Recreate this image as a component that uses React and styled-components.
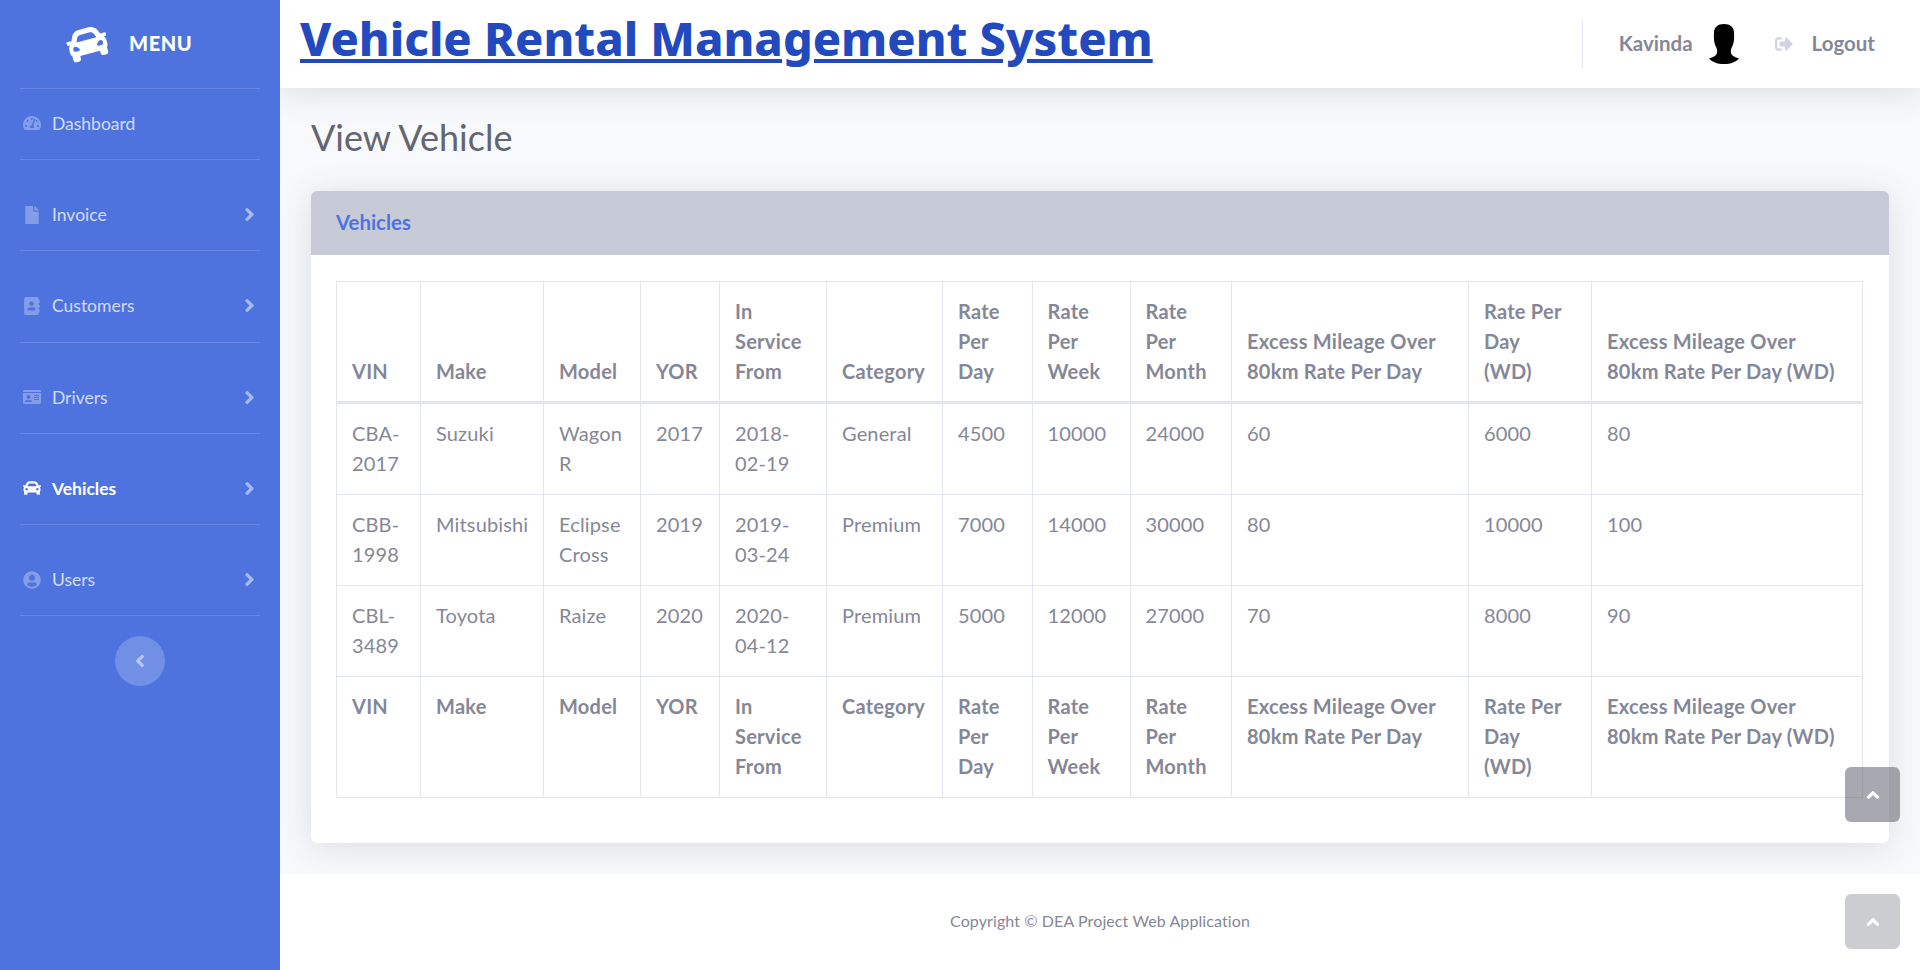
import { Fragment } from 'react';
import styled, { createGlobalStyle } from 'styled-components';
import {
  FaTachometerAlt,
  FaFile,
  FaAddressBook,
  FaIdCard,
  FaCar,
  FaUserCircle,
  FaAngleRight,
  FaAngleLeft,
  FaAngleUp,
  FaSignOutAlt,
} from 'react-icons/fa';

const GlobalStyle = createGlobalStyle`
  * {
    box-sizing: border-box;
  }
  body {
    margin: 0;
    background: #f8f9fc;
    font-family: 'Lato', 'Open Sans', sans-serif;
    color: #858796;
  }
`;

const Wrapper = styled.div`
  display: flex;
  min-height: 100vh;
`;

const Sidebar = styled.aside`
  width: 280px;
  flex-shrink: 0;
  background: #4e73df;
  display: flex;
  flex-direction: column;
  align-items: center;
  position: relative;
  z-index: 1;
`;

const Brand = styled.div`
  width: 100%;
  height: 88px;
  padding: 0 0 2px 67px;
  display: flex;
  align-items: center;
  gap: 21px;
  color: #fff;
  font-size: 20px;
  font-weight: 900;
  letter-spacing: 0.6px;
  text-transform: uppercase;
  svg {
    font-size: 41px;
    transform: rotate(-15deg);
  }
`;

const Divider = styled.hr`
  width: 240px;
  flex-shrink: 0;
  margin: 0;
  border: 0;
  border-top: 1px solid rgba(255, 255, 255, 0.15);
`;

const NavItem = styled.a`
  width: 100%;
  height: ${p => (p.$short ? '70px' : '90.25px')};
  padding: ${p => (p.$short ? '0 0 2px 21px' : '19px 20px 0 21px')};
  display: flex;
  align-items: center;
  font-size: 17.5px;
  font-weight: ${p => (p.$active ? 700 : 400)};
  color: ${p => (p.$active ? '#fff' : 'rgba(255, 255, 255, 0.75)')};
`;

const NavIcon = styled.span`
  width: 21px;
  margin-right: 10px;
  display: flex;
  justify-content: center;
  color: ${p => (p.$active ? '#fff' : 'rgba(255, 255, 255, 0.3)')};
  svg {
    height: 18px;
    width: auto;
  }
`;

const NavLabel = styled.span`
  flex: 1;
`;

const Chevron = styled(FaAngleRight)`
  font-size: 21px;
  color: rgba(255, 255, 255, 0.5);
`;

const Toggle = styled.button`
  width: 50px;
  height: 50px;
  margin-top: 20px;
  padding: 0;
  border: 0;
  border-radius: 50%;
  display: flex;
  align-items: center;
  justify-content: center;
  background: rgba(255, 255, 255, 0.2);
  color: rgba(255, 255, 255, 0.5);
  font-size: 20px;
`;

const Content = styled.div`
  flex: 1;
  min-width: 0;
  display: flex;
  flex-direction: column;
`;

const Topbar = styled.header`
  height: 88px;
  flex-shrink: 0;
  padding: 0 45px 0 20px;
  display: flex;
  align-items: center;
  justify-content: space-between;
  background: #fff;
  box-shadow: 0 4px 35px rgba(58, 59, 69, 0.15);
  position: relative;
`;

const Title = styled.h1`
  margin: 0 0 12px;
  font-family: 'Noto Sans', 'Lato', sans-serif;
  font-size: 46.8px;
  line-height: 60px;
  font-weight: 800;
  color: #224abe;
  text-decoration: underline;
`;

const TopRight = styled.div`
  display: flex;
  align-items: center;
  font-size: 20.5px;
  font-weight: 700;
`;

const TopDivider = styled.div`
  width: 1px;
  height: 48px;
  margin-right: 36px;
  background: #e3e6f0;
`;

const TopText = styled.span`
  padding-bottom: 2px;
`;

const Avatar = styled.svg`
  width: 40px;
  height: 40px;
  margin: 0 31px 0 11px;
`;

const LogoutIcon = styled(FaSignOutAlt)`
  font-size: 18px;
  color: #d1d3e2;
  margin-right: 19px;
`;

const Main = styled.main`
  flex: 1;
  padding: 28px 31px 30px;
`;

const PageTitle = styled.h2`
  margin: 0 0 33px;
  font-size: 36px;
  line-height: 42px;
  font-weight: 400;
  color: #63656f;
`;

const Card = styled.section`
  background: #fff;
  border-radius: 6px;
  overflow: hidden;
  box-shadow: 0 4px 35px rgba(58, 59, 69, 0.15);
`;

const CardHeader = styled.div`
  height: 64px;
  padding: 0 25px 2px;
  display: flex;
  align-items: center;
  background: #c7cbd7;
  color: #4e73df;
  font-size: 20.4px;
  font-weight: 700;
`;

const CardBody = styled.div`
  padding: 26px 25px 45px;
`;

const Table = styled.table`
  width: 1526px;
  table-layout: fixed;
  border-collapse: collapse;
  font-size: 20px;
  line-height: 30px;
  letter-spacing: 0.15px;
  color: #858796;
`;

const Th = styled.th`
  padding: 14px 15px ${p => (p.$head ? '15px' : '16px')};
  text-align: left;
  font-weight: 700;
  letter-spacing: 0.25px;
  white-space: pre-line;
  border: 1px solid #e3e6f0;
  border-bottom-width: ${p => (p.$head ? '3px' : '1px')};
  vertical-align: ${p => (p.$head ? 'bottom' : 'top')};
`;

const Td = styled.td`
  padding: 14px 15px 16px;
  border: 1px solid #e3e6f0;
  vertical-align: top;
`;

const Footer = styled.footer`
  height: 96px;
  flex-shrink: 0;
  padding-bottom: 3px;
  display: flex;
  align-items: center;
  justify-content: center;
  background: #fff;
  font-size: 16px;
  letter-spacing: 0.1px;
  color: #858796;
`;

const ScrollTop = styled.a`
  position: fixed;
  right: 20px;
  bottom: ${p => p.$bottom}px;
  width: 55px;
  height: 55px;
  border-radius: 6px;
  display: flex;
  align-items: center;
  justify-content: center;
  background: rgba(90, 92, 105, ${p => p.$alpha});
  color: #fff;
  font-size: 20px;
`;

const colWidths = [84, 123, 97, 79, 107, 116, 89.5, 98, 101.5, 237, 123, 271];

const columns = [
  'VIN',
  'Make',
  'Model',
  'YOR',
  'In Service From',
  'Category',
  'Rate Per Day',
  'Rate Per Week',
  'Rate Per Month',
  'Excess Mileage Over 80km Rate Per Day',
  'Rate Per\nDay\n(WD)',
  'Excess Mileage Over 80km Rate Per Day (WD)',
];

const vehicles = [
  ['CBA-2017', 'Suzuki', 'Wagon R', '2017', '2018-02-19', 'General', '4500', '10000', '24000', '60', '6000', '80'],
  ['CBB-1998', 'Mitsubishi', 'Eclipse Cross', '2019', '2019-03-24', 'Premium', '7000', '14000', '30000', '80', '10000', '100'],
  ['CBL-3489', 'Toyota', 'Raize', '2020', '2020-04-12', 'Premium', '5000', '12000', '27000', '70', '8000', '90'],
];

const navItems = [
  { label: 'Invoice', icon: <FaFile /> },
  { label: 'Customers', icon: <FaAddressBook /> },
  { label: 'Drivers', icon: <FaIdCard /> },
  { label: 'Vehicles', icon: <FaCar />, active: true },
  { label: 'Users', icon: <FaUserCircle /> },
];

export default function App() {
  return (
    <>
      <GlobalStyle />
      <Wrapper>
        <Sidebar>
          <Brand>
            <FaCar />
            <span>Menu</span>
          </Brand>
          <Divider />
          <NavItem $short>
            <NavIcon>
              <FaTachometerAlt />
            </NavIcon>
            <NavLabel>Dashboard</NavLabel>
          </NavItem>
          <Divider />
          {navItems.map(item => (
            <Fragment key={item.label}>
              <NavItem $active={item.active}>
                <NavIcon $active={item.active}>{item.icon}</NavIcon>
                <NavLabel>{item.label}</NavLabel>
                <Chevron />
              </NavItem>
              <Divider />
            </Fragment>
          ))}
          <Toggle>
            <FaAngleLeft />
          </Toggle>
        </Sidebar>
        <Content>
          <Topbar>
            <Title>Vehicle Rental Management System</Title>
            <TopRight>
              <TopDivider />
              <TopText>Kavinda</TopText>
              <Avatar viewBox="0 0 40 40">
                <path d="M20 0C26 0 30 3 30 9C30.5 14 30 20 27.5 24C26.5 27 26.5 29 28 31C30 33 33 34 35 34.5C32 38 27 40 20 40C13 40 8 38 5 34.5C7 34 10 33 12 31C13.5 29 13.5 27 12.5 24C10 20 9.5 14 10 9C10 3 14 0 20 0Z" />
              </Avatar>
              <LogoutIcon />
              <TopText>Logout</TopText>
            </TopRight>
          </Topbar>
          <Main>
            <PageTitle>View Vehicle</PageTitle>
            <Card>
              <CardHeader>Vehicles</CardHeader>
              <CardBody>
                <Table>
                  <colgroup>
                    {colWidths.map((w, i) => (
                      <col key={i} width={w} />
                    ))}
                  </colgroup>
                  <thead>
                    <tr>
                      {columns.map(c => (
                        <Th key={c} $head>
                          {c}
                        </Th>
                      ))}
                    </tr>
                  </thead>
                  <tbody>
                    {vehicles.map(row => (
                      <tr key={row[0]}>
                        {row.map((cell, i) => (
                          <Td key={i}>{cell}</Td>
                        ))}
                      </tr>
                    ))}
                  </tbody>
                  <tfoot>
                    <tr>
                      {columns.map(c => (
                        <Th key={c}>{c}</Th>
                      ))}
                    </tr>
                  </tfoot>
                </Table>
              </CardBody>
            </Card>
          </Main>
          <Footer>Copyright © DEA Project Web Application</Footer>
        </Content>
      </Wrapper>
      <ScrollTop $bottom={148} $alpha={0.53}>
        <FaAngleUp />
      </ScrollTop>
      <ScrollTop $bottom={21} $alpha={0.31}>
        <FaAngleUp />
      </ScrollTop>
    </>
  );
}
